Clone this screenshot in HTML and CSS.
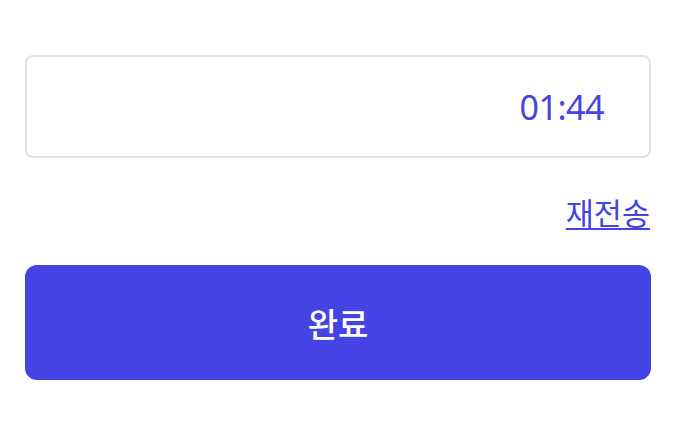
FILE: index.html
```html
<!DOCTYPE html>
<html lang="ko">
<head>
<meta charset="utf-8">
<link rel="stylesheet" href="styles.css">
</head>
<body>
<main class="form">
  <div class="code-field">
    <input class="code-input" type="text" aria-label="인증번호">
    <span class="timer">01:44</span>
  </div>
  <div class="resend-row">
    <a class="resend" href="#">재전송</a>
  </div>
  <button class="submit" type="button">완료</button>
</main>
</body>
</html>
```

FILE: styles.css
```css
html, body {
  margin: 0;
  padding: 0;
  background: #ffffff;
}
body {
  font-family: "Noto Sans CJK KR", "Noto Sans", sans-serif;
}
.form {
  display: flex;
  flex-direction: column;
  padding: 55px 25px 0 25px;
}
.code-field {
  position: relative;
  height: 103px;
}
.code-input {
  box-sizing: border-box;
  width: 100%;
  height: 100%;
  border: 2px solid #e3e3e3;
  border-radius: 8px;
  background: #fff;
  outline: none;
  padding: 0 20px;
  font: inherit;
}
.timer {
  position: absolute;
  right: 47px;
  top: 50%;
  transform: translateY(-50%);
  font-family: "Noto Sans", "Noto Sans CJK KR", sans-serif;
  font-size: 34px;
  line-height: 1;
  color: #4444e2;
  letter-spacing: -0.5px;
}
.resend-row {
  display: flex;
  justify-content: flex-end;
  margin-top: 34px;
  padding-right: 1px;
}
.resend {
  font-size: 30.5px;
  line-height: 40px;
  color: #4444e2;
  text-decoration: underline;
  text-underline-offset: 3px;
  text-decoration-thickness: 2px;
}
.submit {
  margin-top: 33px;
  height: 115px;
  border: none;
  border-radius: 12px;
  background: #4444e4;
  color: #ffffff;
  font: inherit;
  font-size: 33px;
  font-weight: 500;
}
```
